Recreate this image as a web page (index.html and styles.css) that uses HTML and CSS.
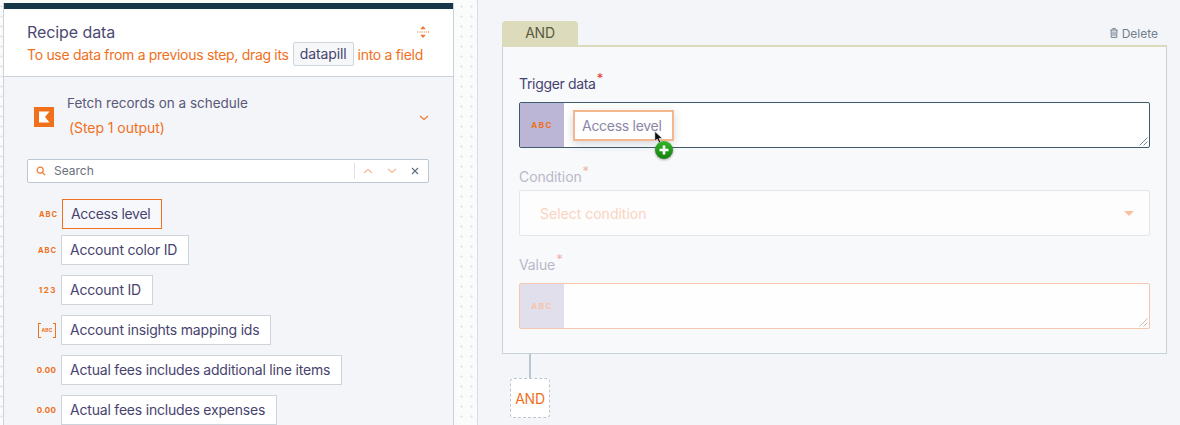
FILE: index.html
```html
<!DOCTYPE html>
<html lang="en">
<head>
<meta charset="utf-8">
<title>Recipe data</title>
<link rel="stylesheet" href="styles.css">
</head>
<body>
<div class="page">
  <aside class="panel">
    <header class="head">
      <div class="head-top">
        <h2>Recipe data</h2>
        <svg class="resize" width="14" height="14" viewBox="0 0 14 14"><path d="M7 1 9.8 4.2H4.2Z M7 13 9.8 9.8H4.2Z" fill="#ef7a2c"/><path d="M1 7H13" stroke="#ef8a4c" stroke-width="1" stroke-dasharray="1.3 .9"/></svg>
      </div>
      <p class="hint">To use data from a previous step, drag its <span class="chip">datapill</span> into a field</p>
    </header>
    <div class="body">
      <div class="step">
        <svg class="logo" width="20" height="20" viewBox="0 0 20 20"><rect width="20" height="20" fill="#f0701c"/><path d="M5 4.5H15.5L11 10L15.5 15.5H5Z" fill="#fff"/></svg>
        <div class="step-text">
          <div class="step-name">Fetch records on a schedule</div>
          <div class="step-out">(Step 1 output)</div>
        </div>
        <svg class="step-chev" width="10" height="6" viewBox="0 0 10 6"><path d="M1 1 5 4.5 9 1" fill="none" stroke="#ef7a2c" stroke-width="1.2"/></svg>
      </div>
      <div class="search">
        <svg width="10" height="10" viewBox="0 0 12 12"><circle cx="5" cy="5" r="3.6" fill="none" stroke="#ef7a2c" stroke-width="1.4"/><path d="M7.6 7.6 11 11" stroke="#ef7a2c" stroke-width="1.5"/></svg>
        <span class="search-label">Search</span>
        <span class="search-tools">
          <svg width="10" height="6" viewBox="0 0 10 6"><path d="M1 5 5 1.5 9 5" fill="none" stroke="#f7b897" stroke-width="1.1"/></svg>
          <svg width="10" height="6" viewBox="0 0 10 6"><path d="M1 1 5 4.5 9 1" fill="none" stroke="#f7b897" stroke-width="1.1"/></svg>
          <svg width="8" height="8" viewBox="0 0 8 8"><path d="M1 1 7 7M7 1 1 7" fill="none" stroke="#5b6f80" stroke-width="1.1"/></svg>
        </span>
      </div>
      <ul class="pills">
        <li class="row active"><span class="type">ABC</span><span class="pill">Access level</span></li>
        <li class="row"><span class="type">ABC</span><span class="pill">Account color ID</span></li>
        <li class="row"><span class="type digits">123</span><span class="pill">Account ID</span></li>
        <li class="row"><span class="type list"><i class="br-l"></i><span>ABC</span><i class="br-r"></i></span><span class="pill">Account insights mapping ids</span></li>
        <li class="row"><span class="type num">0.00</span><span class="pill">Actual fees includes additional line items</span></li>
        <li class="row"><span class="type num">0.00</span><span class="pill">Actual fees includes expenses</span></li>
      </ul>
    </div>
  </aside>
  <main class="canvas">
    <div class="tabs">
      <span class="tab">AND</span>
      <span class="delete"><svg width="8" height="10" viewBox="0 0 8 10"><path d="M2.7 1.5V.6H5.3V1.5M.4 2H7.6M1.2 2V9.4H6.8V2M3 3.5V8M5 3.5V8" fill="none" stroke="#71808e" stroke-width="1"/></svg>Delete</span>
    </div>
    <section class="card">
      <div class="field">
        <label class="label-trigger">Trigger data<sup>*</sup></label>
        <div class="box active-box">
          <span class="box-type">ABC</span>
          <div class="box-input"></div>
          <svg class="grip" width="9" height="9" viewBox="0 0 9 9"><path d="M0.5 8.5 8.5 0.5M4.5 8.5 8.5 4.5" stroke="#7d8a96" stroke-width="1"/></svg>
          <div class="drag">
            <span class="drag-pill">Access level</span>
            <svg class="cursor" width="10" height="15" viewBox="0 0 13 18"><path d="M1 1V14L4.2 11 6.5 16 8.8 15 6.6 10.3H11Z" fill="#111" stroke="#fff" stroke-width=".8"/></svg>
            <svg class="plus" width="20" height="20" viewBox="0 0 20 20"><defs><linearGradient id="plusFill" x1="0" y1="0" x2="0" y2="1"><stop offset="0" stop-color="#35b52b"/><stop offset="1" stop-color="#14800f"/></linearGradient></defs><circle cx="10" cy="10" r="9" fill="url(#plusFill)"/><path d="M10 5.5V14.5M5.5 10H14.5" stroke="#fff" stroke-width="2.6"/></svg>
          </div>
        </div>
      </div>
      <div class="field faded tight">
        <label>Condition<sup>*</sup></label>
        <div class="select"><span>Select condition</span><i class="caret"></i></div>
      </div>
      <div class="field faded">
        <label>Value<sup>*</sup></label>
        <div class="box value-box">
          <span class="box-type">ABC</span>
          <div class="box-input"></div>
          <svg class="grip" width="9" height="9" viewBox="0 0 9 9"><path d="M0.5 8.5 8.5 0.5M4.5 8.5 8.5 4.5" stroke="#c5b9b2" stroke-width="1"/></svg>
        </div>
      </div>
    </section>
    <div class="connector"></div>
    <button class="add">AND</button>
  </main>
</div>
</body>
</html>
```
FILE: styles.css
```css
* { box-sizing: border-box; }
html, body { margin: 0; padding: 0; }
body {
  width: 1180px; height: 425px; overflow: hidden;
  font-family: "Inter", "Liberation Sans", sans-serif;
  color: #47436f;
  background: #fafbfb;
}
.page {
  display: flex; height: 425px; padding-left: 3px;
  background-image: radial-gradient(circle at 1.5px 6.5px, #e8e8ea 1px, transparent 1.3px);
  background-size: 10px 10px;
}
.panel {
  width: 451px; height: 422px; margin-top: 3px; flex: none;
  border: 1px solid #cbd2db; border-top: 0; border-bottom: 0;
  background: #f3f5f8; overflow: hidden;
}
.head {
  height: 74px; background: #fff; border-top: 6px solid #17364a;
  border-bottom: 1px solid #cbd2db; padding: 11px 24px 0 23px;
}
.head-top { display: flex; justify-content: space-between; align-items: center; height: 23px; }
h2 { margin: 0; font-size: 16px; font-weight: 400; color: #4d4a72; letter-spacing: -.08px; }
.resize { margin-right: -1px; }
.hint { margin: -1px 0 0; font-size: 14px; letter-spacing: -.3px; color: #f0701c; display: flex; align-items: center; gap: 3px; white-space: nowrap; height: 24px; }
.chip { font-size: 14px; letter-spacing: -.1px; color: #47436f; background: #f6f7f9; border: 1px solid #cdd5de; border-radius: 2px; height: 24px; line-height: 22px; padding: 0 6px; margin: 0 1px; }
.body { padding: 0 24px 0 23px; }
.step { height: 82px; display: flex; align-items: center; padding: 0 0 4px 7px; position: relative; }
.logo { flex: none; margin-top: 2px; }
.step-text { margin: -1px 0 0 13px; }
.step-name { font-size: 13.5px; color: #5b5878; line-height: 18px; }
.step-out { font-size: 14px; letter-spacing: -.06px; color: #f0701c; line-height: 18px; margin-top: 7px; margin-left: 2px; }
.step-chev { position: absolute; right: 0; top: 38px; }
.search {
  height: 24px; background: #fff; border: 1px solid #bcc7d2; border-radius: 2px;
  display: flex; align-items: center; padding-left: 8px;
}
.search-label { font-size: 12px; line-height: 20px; margin-top: -1px; color: #6b6f7c; margin-left: 8px; }
.search-tools { margin-left: auto; height: 16px; border-left: 1px solid #dfe3e8; width: 74px; display: flex; align-items: center; gap: 14px; padding-left: 8px; }
.pills { list-style: none; margin: 16px 0 0; padding: 0; }
.row { display: flex; align-items: center; height: 30px; margin-bottom: 10px; }
.row.active { margin-bottom: 6px; }
.type { width: 34px; flex: none; font-size: 7.5px; font-weight: 700; color: #f0701c; letter-spacing: 1px; text-align: right; padding-right: 4px; white-space: nowrap; }
.type.digits { font-size: 8px; letter-spacing: 1.5px; }
.type.num { letter-spacing: .2px; font-size: 8px; padding-right: 5px; }
.type.list { display: flex; justify-content: flex-end; align-items: center; padding-right: 5px; height: 15px; }
.type.list span { font-size: 5px; letter-spacing: .1px; line-height: 15px; padding: 0 .5px; }
.br-l, .br-r { display: block; flex: none; width: 3px; height: 15px; border: 1px solid #f0701c; }
.br-l { border-right: 0; }
.br-r { border-left: 0; }
.pill { display: block; height: 30px; line-height: 28px; background: #fff; border: 1px solid #ced4dc; padding: 0 11px 0 8px; font-size: 14px; letter-spacing: -.2px; color: #47436f; white-space: nowrap; }
.row.active .pill { border-color: #f0701c; background: #f7f8fb; margin-left: 1px; letter-spacing: -.3px; }
.row.active .type { padding-right: 3px; }
.canvas { flex: 1; margin-left: 23px; height: 425px; border-left: 1px solid #d8dde3; padding: 21px 13px 0 24px; background: #f4f5f8; }
.tabs { display: flex; justify-content: space-between; align-items: flex-end; height: 24px; padding-right: 9px; }
.tab { width: 76px; height: 24px; background: #dcdcbc; border-radius: 4px 4px 0 0; font-size: 14px; line-height: 24px; text-align: center; color: #5a5a3e; letter-spacing: -.2px; }
.delete { font-size: 12px; color: #71808e; display: flex; align-items: center; gap: 4px; height: 24px; }
.card { height: 309px; background: #f8f9fb; border: 1px solid #c9d1d9; border-top: 2px solid #dcdcbc; padding: 27px 0 0 16px; }
.field { width: 631px; margin-bottom: 19px; }
.field label { display: block; font-size: 14px; line-height: 20px; color: #47436f; margin-bottom: 8px; letter-spacing: -.1px; }
.field .label-trigger { letter-spacing: -.33px; }
.field.tight label { margin-bottom: 3px; }
.field sup { color: #e23b2e; font-size: 13px; line-height: 0; margin-left: 1px; }
.box { height: 46px; display: flex; border: 1px solid #3f5a6c; border-radius: 2px; position: relative; background: #fff; }
.box-type { width: 44px; flex: none; background: #bcb6d6; color: #f0701c; font-size: 8px; font-weight: 700; letter-spacing: 1.5px; text-align: center; line-height: 44px; }
.box-input { flex: 1; }
.grip { position: absolute; right: 1px; bottom: 1px; }
.drag { position: absolute; left: 53px; top: 7px; }
.drag-pill { display: block; width: 101px; height: 31px; line-height: 27px; background: #fff; border: 2px solid #f4b68d; padding-left: 7px; font-size: 14px; letter-spacing: -.28px; color: #8a87a6; box-shadow: 0 3px 10px rgba(60,70,90,.22); white-space: nowrap; }
.cursor { position: absolute; left: 81px; top: 20px; }
.plus { position: absolute; left: 81px; top: 30px; filter: drop-shadow(0 1px 1px rgba(0,0,0,.35)); }
.faded label { color: #b8b8c8; }
.faded sup { color: #f3b3ab; }
.select { height: 46px; border: 1px solid #e3e6ec; background: #fdfdfe; border-radius: 2px; display: flex; align-items: center; justify-content: space-between; padding: 0 15px 0 20px; font-size: 14px; color: #fbd3bd; }
.caret { width: 0; height: 0; border: 5px solid transparent; border-top: 5px solid #f8c19c; border-bottom: 0; }
.value-box { border-color: #f7c6ae; background: #fdfefd; }
.value-box .box-type { background: #e0dfeb; color: #f9c4a7; }
.connector { width: 2px; height: 24px; background: #bbc5cd; margin-left: 27px; }
.add { display: block; width: 40px; height: 40px; background: #fff; border: 1px dashed #bcc6ce; border-radius: 4px; color: #f0701c; font: 14px "Inter", "Liberation Sans", sans-serif; letter-spacing: -.2px; padding: 0; margin-left: 8px; }
```
